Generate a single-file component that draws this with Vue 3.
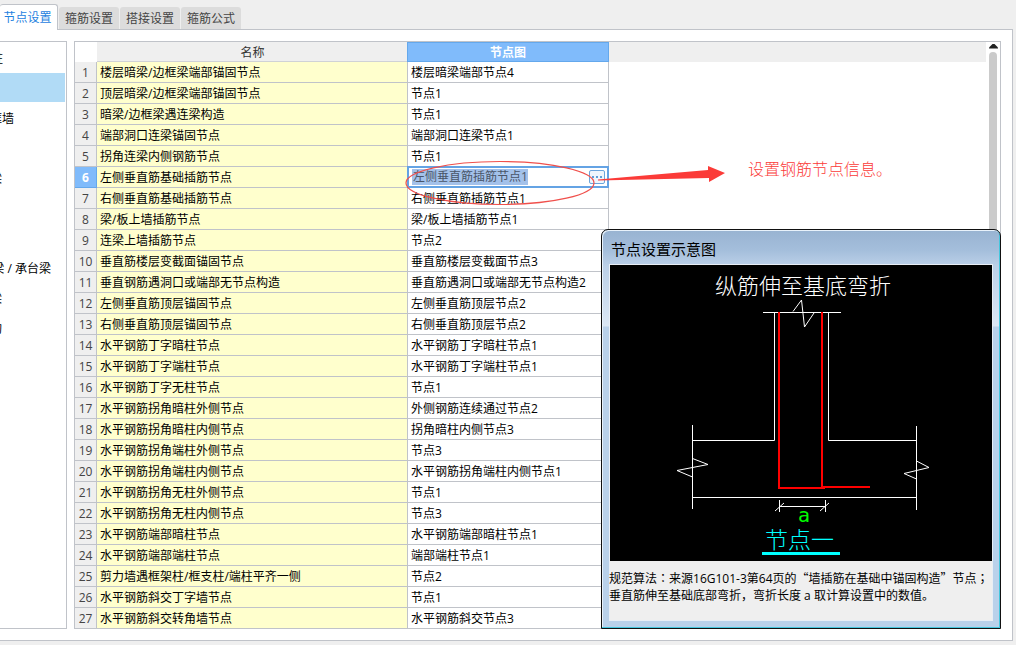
<script setup>
import { ref } from 'vue'

const tabs = ['节点设置', '箍筋设置', '搭接设置', '箍筋公式']
const activeTab = ref(0)

const tree = [
  { text: '柱', visible: 3 },
  { text: '', visible: 0, selected: true },
  { text: '框墙', visible: 14 },
  { text: '', visible: 0 },
  { text: '梁', visible: 2 },
  { text: '', visible: 0 },
  { text: '', visible: 0 },
  { text: '梁 / 承台梁', visible: 51 },
  { text: '梁', visible: 2 },
  { text: '构', visible: 2 },
]

const rows = [
  ['楼层暗梁/边框梁端部锚固节点', '楼层暗梁端部节点4'],
  ['顶层暗梁/边框梁端部锚固节点', '节点1'],
  ['暗梁/边框梁遇连梁构造', '节点1'],
  ['端部洞口连梁锚固节点', '端部洞口连梁节点1'],
  ['拐角连梁内侧钢筋节点', '节点1'],
  ['左侧垂直筋基础插筋节点', '左侧垂直筋插筋节点1'],
  ['右侧垂直筋基础插筋节点', '右侧垂直筋插筋节点1'],
  ['梁/板上墙插筋节点', '梁/板上墙插筋节点1'],
  ['连梁上墙插筋节点', '节点2'],
  ['垂直筋楼层变截面锚固节点', '垂直筋楼层变截面节点3'],
  ['垂直钢筋遇洞口或端部无节点构造', '垂直筋遇洞口或端部无节点构造2'],
  ['左侧垂直筋顶层锚固节点', '左侧垂直筋顶层节点2'],
  ['右侧垂直筋顶层锚固节点', '右侧垂直筋顶层节点2'],
  ['水平钢筋丁字暗柱节点', '水平钢筋丁字暗柱节点1'],
  ['水平钢筋丁字端柱节点', '水平钢筋丁字端柱节点1'],
  ['水平钢筋丁字无柱节点', '节点1'],
  ['水平钢筋拐角暗柱外侧节点', '外侧钢筋连续通过节点2'],
  ['水平钢筋拐角暗柱内侧节点', '拐角暗柱内侧节点3'],
  ['水平钢筋拐角端柱外侧节点', '节点3'],
  ['水平钢筋拐角端柱内侧节点', '水平钢筋拐角端柱内侧节点1'],
  ['水平钢筋拐角无柱外侧节点', '节点1'],
  ['水平钢筋拐角无柱内侧节点', '节点3'],
  ['水平钢筋端部暗柱节点', '水平钢筋端部暗柱节点1'],
  ['水平钢筋端部端柱节点', '端部端柱节点1'],
  ['剪力墙遇框架柱/框支柱/端柱平齐一侧', '节点2'],
  ['水平钢筋斜交丁字墙节点', '节点1'],
  ['水平钢筋斜交转角墙节点', '水平钢筋斜交节点3'],
]
const editing = 5
const editValue = ref(rows[editing][1])
</script>

<template>
  <div class="window">
    <div class="tabs" role="tablist">
      <button
        v-for="(t, i) in tabs"
        :key="t"
        type="button"
        role="tab"
        :aria-selected="i === activeTab"
        :class="['tab', { active: i === activeTab }]"
        @click="activeTab = i"
      >{{ t }}</button>
    </div>

    <main class="page">
      <ul class="tree">
        <li v-for="(n, i) in tree" :key="i" :class="{ selected: n.selected }">
          <span class="label" :style="{ width: n.visible + 'px' }">{{ n.text }}</span>
        </li>
      </ul>

      <div class="grid-area">
        <div class="grid-panel">
          <table class="grid">
            <colgroup><col class="c-num" /><col class="c-name" /><col class="c-node" /><col /></colgroup>
            <thead>
              <tr>
                <td class="corner"></td>
                <th scope="col">名称</th>
                <th scope="col" class="current">节点图</th>
                <td class="rest"></td>
              </tr>
            </thead>
            <tbody>
              <tr v-for="(r, i) in rows" :key="i">
                <th scope="row" :class="{ current: i === editing }">{{ i + 1 }}</th>
                <td class="name">{{ r[0] }}</td>
                <td v-if="i === editing" class="edit">
                  <div class="editor">
                    <input v-model="editValue" aria-label="节点图" size="15" />
                    <button type="button" aria-label="更多"><i></i><i></i><i></i></button>
                  </div>
                </td>
                <td v-else class="node">{{ r[1] }}</td>
                <td class="blank"></td>
              </tr>
            </tbody>
          </table>
          <div class="scrollbar">
            <svg width="9" height="5" viewBox="0 0 9 5"><path d="M0 4.5V3.5L3.5 0H5.5L9 3.5V4.5Z" fill="#222" /></svg>
            <div class="thumb"></div>
          </div>
        </div>

        <svg class="marks" width="326" height="46" viewBox="0 0 326 46">
          <ellipse cx="98" cy="23" rx="94" ry="21.5" fill="none" stroke="#f0504c" stroke-width="1.2" />
          <path d="M196 19.5L306 10V6L323 13L307 22V18L196 20.5Z" fill="#fb3b38" />
        </svg>
        <p class="note">设置钢筋节点信息。</p>

        <section class="dialog" aria-labelledby="dialog-title">
          <h2 id="dialog-title">节点设置示意图</h2>
          <div class="dialog-body">
            <svg class="diagram" viewBox="0 0 382 296" role="img" aria-label="节点一">
              <rect width="382" height="296" fill="#000" />
              <text x="105" y="29" font-size="22" fill="#fff">纵筋伸至基底弯折</text>
              <g fill="none" stroke="#fff" stroke-width="1">
                <path d="M153 47.5H231M164.500 47V175.500H82M218.500 47V175.500H306M82.500 160V244M306.500 161V245M82 232.500H307" />
                <path d="M183 46.500L191.500 35L194.500 62L204 48" />
                <path d="M82.500 193.500L98 199.500L67 205.500L82.500 212" />
                <path d="M306.500 196L319 202.500L294 208.500L306.500 214" />
                <path d="M169.500 235V247M215.500 235V247M169 241.500H216M165 246L174 238M210 246L219 238" />
              </g>
              <g fill="none" stroke="#f00" stroke-width="2">
                <path d="M169 47V223H215M212 47V222H260" />
              </g>
              <text class="dim" x="188" y="257" font-size="20" fill="#0f0">a</text>
              <text x="155" y="283" font-size="23" fill="#0ff">节点一</text>
              <path d="M152 288.500H230" stroke="#0ff" stroke-width="3" />
            </svg>
            <p>规范算法<span class="mid">：</span>来源16G101-3第64页的<span class="q">“</span>墙插筋在基础中锚固构造<span class="q">”</span>节点<span class="mid">；</span><br />垂直筋伸至基础底部弯折，弯折长度 a 取计算设置中的数值。</p>
          </div>
        </section>
      </div>
    </main>
  </div>
</template>

<style>
body { background: #efefef; }
</style>

<style scoped>
* { box-sizing: border-box; }
.window {
  min-height: 100vh;
  padding: 4px 3px 4px 0;
  background: #efefef;
  color: #000;
  font: 12px/16px "Open Sans", "Noto Sans CJK SC", sans-serif;
  text-spacing-trim: space-all;
  overflow: hidden;
}
button, input { font: inherit; margin: 0; }

.tabs { display: flex; align-items: flex-end; height: 26px; gap: 1px; }
.tab {
  width: 60px;
  height: 22px;
  padding: 2px 0 0;
  margin-bottom: 1px;
  border: 0;
  border-radius: 3px 3px 0 0;
  background: #dcdcdc;
  color: #444;
  white-space: nowrap;
}
.tab.active {
  width: 58px;
  height: 26px;
  margin-bottom: 0;
  padding: 1px 2px 0 0;
  border: 1px solid #c0c3c9;
  border-width: 1px 1px 0 0;
  background: #fff;
  color: #1f82e0;
  position: relative;
  z-index: 1;
}

.page {
  display: flex;
  gap: 7px;
  margin-top: -1px;
  padding: 11px 12px 11px 0;
  border: 1px solid #c0c3c9;
  border-left: 0;
  background: #fff;
}

.tree {
  flex: none;
  width: 67px;
  margin: 0;
  padding: 1px 1px 0 0;
  border: 1px solid #c0c3c9;
  border-left: 0;
  list-style: none;
}
.tree li { display: flex; align-items: center; height: 30px; padding-top: 2px; }
.tree .selected { padding: 0 0 1px; background: #b1dbf6; background-clip: content-box; }
.label { display: flex; justify-content: flex-end; overflow: hidden; white-space: pre; }

.grid-area { position: relative; flex: 1; min-width: 0; }
.grid-panel { display: flex; margin-right: -1px; border: 1px solid #c0c3c9; }
.grid { flex: 1; min-width: 0; table-layout: fixed; border-spacing: 0; }
.c-num { width: 22px; }
.c-name { width: 311px; }
.c-node { width: 201px; }
.grid th, .grid td { padding: 2px 0 0; white-space: nowrap; font-weight: 400; }
.grid thead td, .grid thead th { height: 20px; }
.grid thead th { background: #efefef; color: #333; border-bottom: 1px solid #d0d2d6; }
.grid thead th.current {
  background: #80bbfb;
  border: 1px solid #64a8ec;
  border-left: 0;
  box-shadow: -1px 0 #64a8ec;
  color: #fff;
  font-weight: 700;
}
.rest { background: #efefef; }
tbody th, tbody td { height: 21px; border-right: 1px solid #c0c3c9; border-bottom: 1px solid #c0c3c9; }
tbody tr:last-child > * { height: 20px; border-bottom: 0; }
.grid tbody th { background: #efefef; color: #444; text-align: center; }
.grid tbody th.current { background: #80bbfb; border-color: #64a8ec; color: #fff; font-weight: 700; }
.grid td.name { padding-left: 3px; background: #ffffcd; }
.grid td.node { padding-left: 3px; }
.grid td.edit { padding: 0; }
tbody td.blank { border: 0; }
.editor {
  display: flex;
  align-items: center;
  justify-content: space-between;
  height: 22px;
  margin: -1px -1px -1px -1px;
  padding: 0 2px 0 3px;
  border: 2px solid #64a3e4;
  background: #fff;
}
.editor input {
  width: 116px;
  height: 16px;
  padding: 0 0 0 1px;
  border: 0;
  outline: 0;
  background: #a3c1ea;
  color: #4a5568;
}
.editor button {
  display: flex;
  align-items: center;
  justify-content: center;
  gap: 2px;
  width: 16px;
  height: 14px;
  padding: 0;
  border: 1px solid #6aa5dc;
  border-radius: 2px;
  background: #eef6fd;
}
.editor i { width: 2px; height: 2px; background: #5f9fd8; }

.scrollbar { display: flex; flex-direction: column; align-items: center; gap: 3px; width: 14px; padding: 2px 1px 2px 1px; }
.thumb { flex: 1; width: 8px; border-radius: 4px; background: #cbcbcb; }

.marks { position: absolute; left: 328px; top: 119px; }
.note {
  position: absolute;
  left: 674px;
  top: 116px;
  margin: 0;
  color: #fb3b38;
  font-size: 16px;
  line-height: 24px;
  font-weight: 300;
  white-space: nowrap;
}

.dialog {
  position: absolute;
  right: -1px;
  bottom: 0;
  width: 400px;
  padding: 0 7px 7px;
  border: 1px solid #111;
  border-radius: 7px 7px 0 0;
  box-shadow: inset -1px -1px #45c6dd, inset 1px 1px #e8f2fb;
  background: linear-gradient(#98b3d1, #a4bedb 20px, #bbd0e8 36px, #dbe7f4 96px, #b9d1ea 97px);
}
.dialog h2 {
  margin: 0 0 0 2px;
  padding-top: 4px;
  font-size: 15px;
  line-height: 30px;
  font-weight: 400;
}
.dialog-body { border: 1px solid #e8eef5; background: #efefef; }
.diagram { display: block; width: 100%; font-family: "Noto Sans CJK SC", sans-serif; font-weight: 300; }
.dim { font-family: "DejaVu Sans Mono", monospace; font-weight: 400; }
.dialog p { margin: 0 -1px; padding: 8px 0 16px; line-height: 17px; white-space: nowrap; }
.q { font-family: "Noto Sans CJK SC", sans-serif; }
.mid { font-family: "Noto Sans CJK TC", sans-serif; }
</style>
